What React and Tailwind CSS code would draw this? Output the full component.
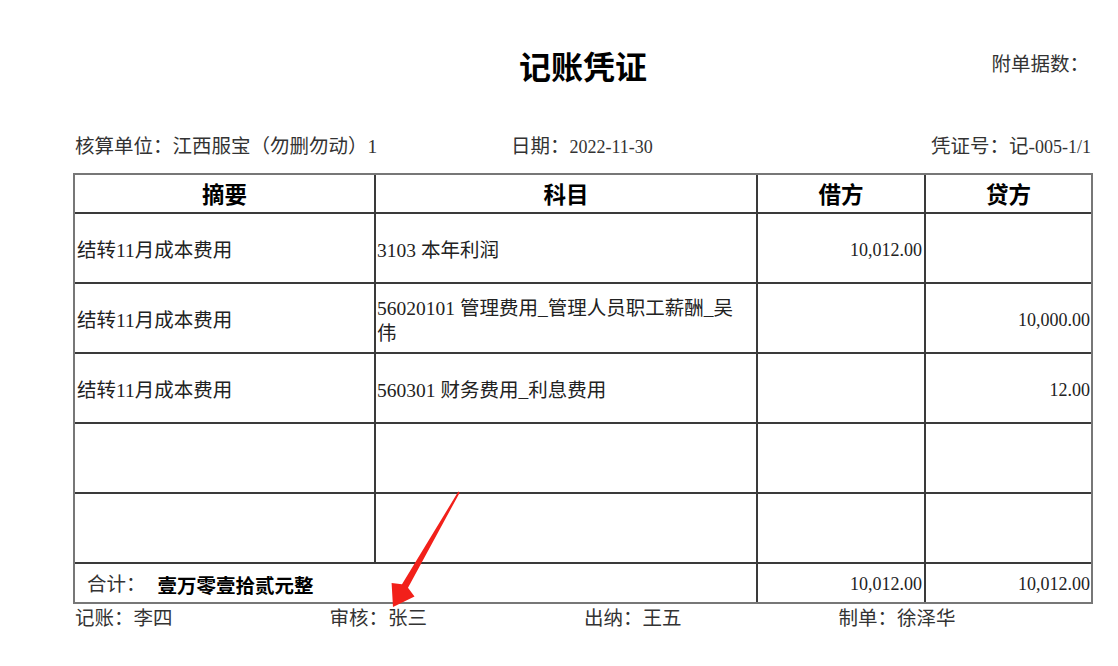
import React from "react";

const rows = [
  { summary: "结转11月成本费用", subject: ["3103 本年利润"], debit: "10,012.00", credit: "" },
  { summary: "结转11月成本费用", subject: ["56020101 管理费用_管理人员职工薪酬_吴", "伟"], debit: "", credit: "10,000.00" },
  { summary: "结转11月成本费用", subject: ["560301 财务费用_利息费用"], debit: "", credit: "12.00" },
  { summary: "", subject: [], debit: "", credit: "" },
  { summary: "", subject: [], debit: "", credit: "" },
];

const cols = "grid grid-cols-[301px_382px_168px_1fr]";
const line = "border-[#3a3a3a]";

const Arrow = () => (
  <svg className="absolute left-0 top-0 pointer-events-none" width="1118" height="666" viewBox="0 0 1118 666">
    <polygon
      points="458.3,491.6 459.8,492.4 408,587.7 414.5,596.4 393,607 391.6,583 402,584.3"
      fill="#f2201a"
    />
  </svg>
);

export default function App() {
  return (
    <div className="relative w-[1118px] h-[666px] bg-white overflow-hidden text-[#222] font-['Liberation_Serif','Noto_Sans_CJK_SC',serif]">
      <div className="w-[1020px] ml-[73px] pt-[44px]">
        {/* title */}
        <div className="grid grid-cols-[1fr_auto_1fr] items-center h-[42px]">
          <div />
          <h1 className="text-[32px] font-bold text-black font-['Noto_Sans_CJK_SC',sans-serif] leading-none">记账凭证</h1>
          <div className="flex justify-end pr-[4px] text-[19.5px] text-[#333]">附单据数：</div>
        </div>

        {/* info */}
        <div className="grid grid-cols-[436px_1fr_auto] items-center h-[26px] mt-[46px] pl-[2px] pr-[2px] text-[19.5px] text-[#333]">
          <span>核算单位：江西服宝（勿删勿动）1</span>
          <span>日期：<span className="text-[18px]">2022-11-30</span></span>
          <span>凭证号：记-<span className="text-[18px]">005-1/1</span></span>
        </div>

        {/* voucher table */}
        <div className="mt-[15px] border-2 border-[#777]">
          <div className={`${cols} h-[39px] border-b-2 ${line} text-[22.5px] font-bold text-black font-['Noto_Sans_CJK_SC',sans-serif]`}>
            <div className={`flex items-center justify-center border-r-2 ${line}`}>摘要</div>
            <div className={`flex items-center justify-center border-r-2 ${line}`}>科目</div>
            <div className={`flex items-center justify-center border-r-2 ${line}`}>借方</div>
            <div className="flex items-center justify-center">贷方</div>
          </div>

          {rows.map((r, i) => (
            <div key={i} className={`${cols} h-[70px] border-b-2 ${line} text-[19.5px]`}>
              <div className={`flex items-center pt-[5px] pl-[2px] border-r-2 ${line}`}>{r.summary}</div>
              <div className={`flex flex-col justify-center pt-[5px] pl-[1px] leading-[25px] border-r-2 ${line}`}>
                {r.subject.map((s, j) => (
                  <span key={j}>{s}</span>
                ))}
              </div>
              <div className={`flex items-center justify-end pt-[5px] pr-[2px] text-[18px] border-r-2 ${line}`}>{r.debit}</div>
              <div className="flex items-center justify-end pt-[5px] pr-[1px] text-[18px]">{r.credit}</div>
            </div>
          ))}

          <div className="grid grid-cols-[683px_168px_1fr] h-[38px] text-[19.5px]">
            <div className={`flex items-center pt-[3px] pl-[12px] border-r-2 ${line}`}>
              <span className="text-[#333]">合计：</span>
              <span className="ml-[12px] font-bold text-black font-['Noto_Sans_CJK_SC',sans-serif]">壹万零壹拾贰元整</span>
            </div>
            <div className={`flex items-center justify-end pt-[3px] pr-[2px] text-[18px] border-r-2 ${line}`}>10,012.00</div>
            <div className="flex items-center justify-end pt-[3px] pr-[1px] text-[18px]">10,012.00</div>
          </div>
        </div>

        {/* signatures */}
        <div className="grid grid-cols-4 h-[30px] items-center pl-[2px] text-[19.5px] text-[#333]">
          <span>记账：李四</span>
          <span>审核：张三</span>
          <span>出纳：王五</span>
          <span>制单：徐泽华</span>
        </div>
      </div>

      <Arrow />
    </div>
  );
}
